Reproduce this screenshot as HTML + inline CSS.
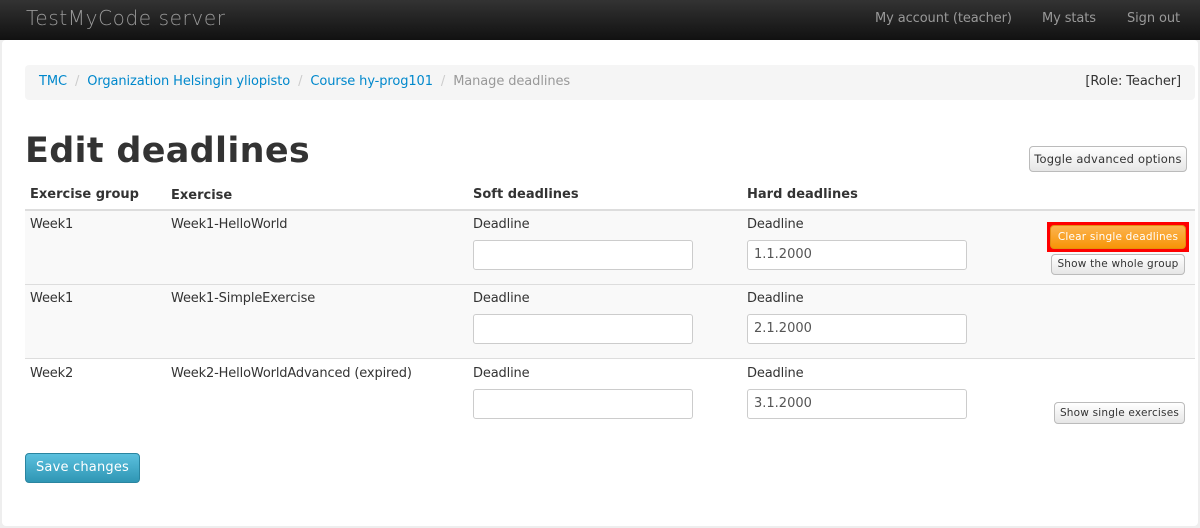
<!DOCTYPE html>
<html><head><style>
*{box-sizing:border-box}
body{margin:0;width:1200px;height:528px;background:#eee;font-family:"DejaVu Sans","Liberation Sans",sans-serif;font-size:13px;color:#333;position:relative;overflow:hidden}
.nav{position:absolute;left:0;top:0;width:1200px;height:40px;background:linear-gradient(#333,#111)}
.brand{position:absolute;left:26px;top:6px;font-size:20px;color:#999;font-weight:300;letter-spacing:0.6px}
.nl{position:absolute;top:11px;color:#999;font-size:13px;letter-spacing:-0.1px}
.page{position:absolute;left:2px;top:40px;width:1196px;height:486px;background:#fff;border-radius:4px}
.bc{position:absolute;left:25px;top:65px;width:1170px;height:35px;background:#f5f5f5;border-radius:4px;padding:9px 14px 0;font-size:13px;letter-spacing:-0.1px}
.bc a{color:#0088cc}.bc .s{color:#ccc;padding:0 8px}
h1{position:absolute;left:25px;top:128px;margin:0;font-size:35px;font-weight:bold;line-height:46px;letter-spacing:0.3px}
.btn{position:absolute;background:linear-gradient(#fff,#e6e6e6);border:1px solid #bbb;border-radius:4px;color:#333;font-size:10.5px;text-align:center;line-height:20px;letter-spacing:0.2px}
.t{position:absolute;font-size:13px;letter-spacing:-0.15px}
.th{font-weight:bold;letter-spacing:0}
.row{position:absolute;left:25px;width:1170px}
.inp{position:absolute;width:220px;height:30px;border:1px solid #ccc;border-radius:3px;background:#fff;padding:6px 6px;font-size:13px;color:#555}
</style></head><body>
<div class="nav"><div class="brand">TestMyCode server</div>
<span class="nl" style="left:875px">My account (teacher)</span><span class="nl" style="left:1042px">My stats</span><span class="nl" style="left:1127px">Sign out</span></div>
<div class="page"></div>
<div class="bc"><a>TMC</a><span class="s">/</span><a>Organization Helsingin yliopisto</a><span class="s">/</span><a>Course hy-prog101</a><span class="s">/</span><span style="color:#999">Manage deadlines</span><span style="position:absolute;right:14px;top:9px">[Role: Teacher]</span></div>
<h1>Edit deadlines</h1>
<div class="btn" style="left:1029px;top:146px;width:158px;height:26px;font-size:11.5px;line-height:24px">Toggle advanced options</div>
<div class="t th" style="left:30px;top:187px">Exercise group</div>
<div class="t th" style="left:171px;top:188px">Exercise</div>
<div class="t th" style="left:473px;top:187px">Soft deadlines</div>
<div class="t th" style="left:747px;top:187px">Hard deadlines</div>
<div class="row" style="top:209px;height:2px;background:#ddd"></div>
<div class="row" style="top:211px;height:73px;background:#f9f9f9"></div>
<div class="row" style="top:284px;height:1px;background:#ddd"></div>
<div class="row" style="top:285px;height:73px;background:#f9f9f9"></div>
<div class="row" style="top:358px;height:1px;background:#ddd"></div>
<div class="t" style="left:30px;top:217px">Week1</div><div class="t" style="left:171px;top:217px">Week1-HelloWorld</div>
<div class="t" style="left:473px;top:217px">Deadline</div><div class="t" style="left:747px;top:217px">Deadline</div>
<div class="inp" style="left:473px;top:240px"></div><div class="inp" style="left:747px;top:240px">1.1.2000</div>
<div style="position:absolute;left:1047px;top:222px;width:142px;height:30px;background:#f00"></div>
<div class="btn" style="left:1050px;top:225px;width:136px;height:24px;background:linear-gradient(#fbb450,#f89406);border-color:#e38d13;color:#fff;line-height:22px">Clear single deadlines</div>
<div class="btn" style="left:1051px;top:254px;width:134px;height:21px;line-height:19px">Show the whole group</div>
<div class="t" style="left:30px;top:291px">Week1</div><div class="t" style="left:171px;top:291px">Week1-SimpleExercise</div>
<div class="t" style="left:473px;top:291px">Deadline</div><div class="t" style="left:747px;top:291px">Deadline</div>
<div class="inp" style="left:473px;top:314px"></div><div class="inp" style="left:747px;top:314px">2.1.2000</div>
<div class="t" style="left:30px;top:366px">Week2</div><div class="t" style="left:171px;top:366px">Week2-HelloWorldAdvanced (expired)</div>
<div class="t" style="left:473px;top:366px">Deadline</div><div class="t" style="left:747px;top:366px">Deadline</div>
<div class="inp" style="left:473px;top:389px"></div><div class="inp" style="left:747px;top:389px">3.1.2000</div>
<div class="btn" style="left:1054px;top:402px;width:131px;height:22px;line-height:20px">Show single exercises</div>
<div class="btn" style="left:25px;top:453px;width:115px;height:30px;background:linear-gradient(#5bc0de,#2f96b4);border-color:#2a85a0;color:#fff;font-size:13px;line-height:28px">Save changes</div>
</body></html>
